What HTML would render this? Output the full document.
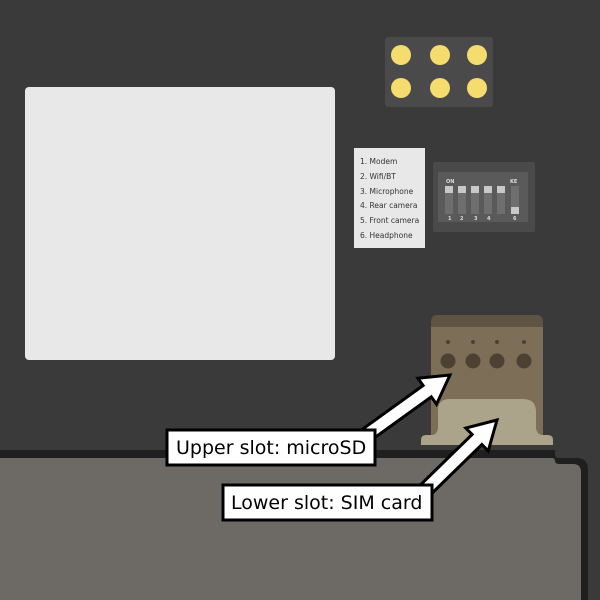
<!DOCTYPE html>
<html><head><style>html,body{margin:0;padding:0;background:#3a3a3a}svg{display:block}</style></head>
<body>
<svg width="600" height="600" viewBox="0 0 600 600" xmlns="http://www.w3.org/2000/svg" font-family="DejaVu Sans, Liberation Sans, sans-serif">
<rect width="600" height="600" fill="#3a3a3a"/>
<rect x="25" y="87" width="310" height="273" rx="4" fill="#e8e8e8"/>
<rect x="385" y="37" width="108" height="70" rx="3" fill="#4a4a4a"/>
<g fill="#f5dc6e">
<circle cx="401" cy="55" r="10"/><circle cx="440" cy="55" r="10"/><circle cx="477" cy="55" r="10"/>
<circle cx="401" cy="88" r="10"/><circle cx="440" cy="88" r="10"/><circle cx="477" cy="88" r="10"/>
</g>
<rect x="354" y="148" width="71" height="100" fill="#e8e8e8"/>
<g font-size="7.5" fill="#333">
<text x="360" y="164">1. Modem</text>
<text x="360" y="179">2. Wifi/BT</text>
<text x="360" y="194">3. Microphone</text>
<text x="360" y="208">4. Rear camera</text>
<text x="360" y="223">5. Front camera</text>
<text x="360" y="238">6. Headphone</text>
</g>
<rect x="433" y="162" width="102" height="70" rx="2" fill="#4a4a4a"/>
<rect x="438" y="172" width="90" height="50" fill="#5a5a5a"/>
<g font-size="5" font-weight="bold" fill="#ddd">
<text x="446" y="183">ON</text><text x="510" y="183">KE</text>
<text x="448" y="220">1</text><text x="460" y="220">2</text><text x="474" y="220">3</text><text x="487" y="220">4</text><text x="513" y="220">6</text>
</g>
<g fill="#6e6e6e">
<rect x="445" y="186" width="8" height="28"/><rect x="458" y="186" width="8" height="28"/><rect x="471" y="186" width="8" height="28"/><rect x="484" y="186" width="8" height="28"/><rect x="497" y="186" width="8" height="28"/><rect x="511" y="186" width="8" height="28"/>
</g>
<g fill="#c8c8c8">
<rect x="445" y="186" width="8" height="7"/><rect x="458" y="186" width="8" height="7"/><rect x="471" y="186" width="8" height="7"/><rect x="484" y="186" width="8" height="7"/><rect x="497" y="186" width="8" height="7"/><rect x="511" y="207" width="8" height="7"/>
</g>
<path d="M431 327 V322 Q431 315 438 315 H536 Q543 315 543 322 V327Z" fill="#5f5444"/>
<rect x="431" y="327" width="112" height="112" fill="#7d6e58"/>
<g fill="#4d4133">
<circle cx="448" cy="342" r="2"/><circle cx="473" cy="342" r="2"/><circle cx="497" cy="342" r="2"/><circle cx="524" cy="342" r="2"/>
<circle cx="448" cy="361" r="7.5"/><circle cx="473" cy="361" r="7.5"/><circle cx="497" cy="361" r="7.5"/><circle cx="524" cy="361" r="7.5"/>
</g>
<path d="M421 445 V440 Q421 435 426 435 H432 Q437 435 438 428 V410 Q438 399 450 399 H523 Q536 399 536 412 V428 Q537 435 543 435 H548 Q553 435 553 440 V445Z" fill="#aca48a"/>
<path d="M0 450 H555 V455 Q555 458 560 458 H577 Q588 458 588 470 V600 H0Z" fill="#1f1f1f"/>
<path d="M0 458 H552 Q555 458 555 461 Q555 464 560 464 H573 Q581 464 581 472 V600 H0Z" fill="#6d6a65"/>
<polygon points="369.1,441.7 431.3,396.9 436.5,404.2 450,375 417.9,378.2 423.1,385.5 360.9,430.3" fill="#fff" stroke="#000" stroke-width="3" stroke-linejoin="miter"/>
<polygon points="419.9,505 481.9,444.5 488.2,451 497,420 465.8,428 472.1,434.5 410.1,495" fill="#fff" stroke="#000" stroke-width="3" stroke-linejoin="miter"/>
<rect x="167" y="430" width="208" height="35" fill="#fff" stroke="#000" stroke-width="3"/>
<text x="176" y="454" font-size="19" fill="#000">Upper slot: microSD</text>
<rect x="223" y="485" width="209" height="35" fill="#fff" stroke="#000" stroke-width="3"/>
<text x="231" y="509" font-size="19" fill="#000">Lower slot: SIM card</text>
</svg>
</body></html>
